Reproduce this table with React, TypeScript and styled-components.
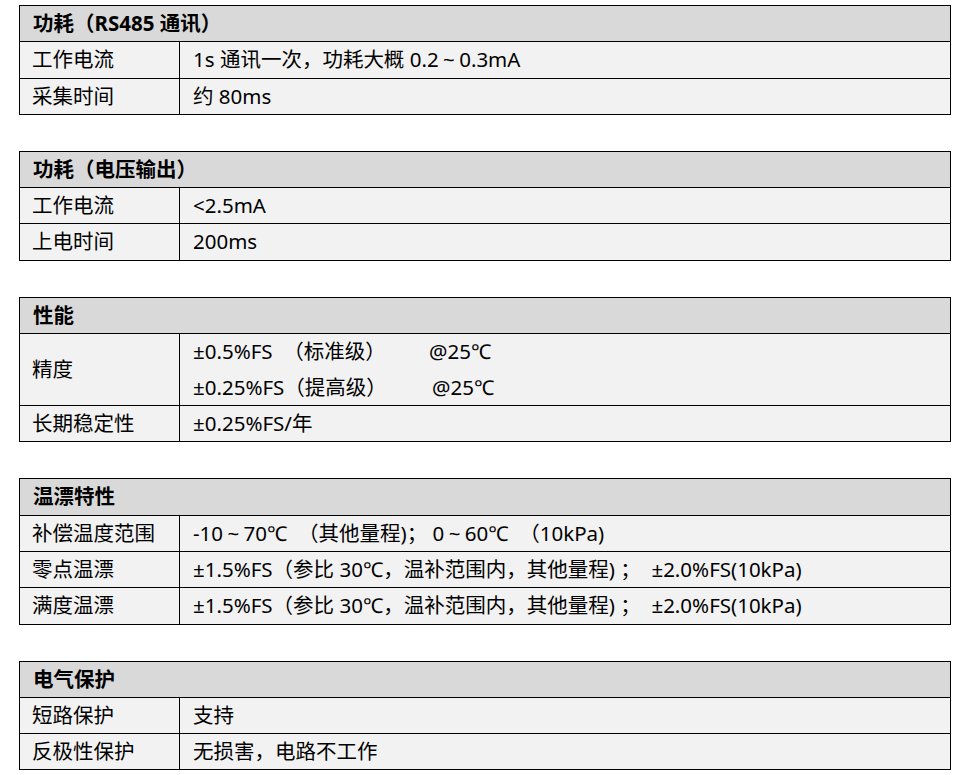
import React from "react";
import styled, { createGlobalStyle } from "styled-components";

const GlobalStyle = createGlobalStyle`
  html, body {
    margin: 0;
    padding: 0;
    background: #ffffff;
  }
  body {
    font-family: "Noto Sans", "Noto Sans CJK SC", sans-serif;
    color: #000000;
  }
`;

const Page = styled.div`
  padding: 5px 19px 0 19px;
  display: flex;
  flex-direction: column;
  gap: 36px;
`;

const Table = styled.table`
  width: 100%;
  border-collapse: collapse;
  table-layout: fixed;
  font-size: 20.5px;
  line-height: 35.3px;
`;

const HeadCell = styled.th`
  background: #d9d9d9;
  border: 1px solid #000;
  text-align: left;
  font-weight: 700;
  padding: 0 13px;
`;

const LabelCell = styled.td`
  background: #f2f2f2;
  border: 1px solid #000;
  padding: 0 12px;
  white-space: nowrap;
`;

const ValueCell = styled.td`
  background: #f2f2f2;
  border: 1px solid #000;
  padding: 0 13px;
  white-space: pre;
`;

const SubLine = styled.div`
  display: flex;
  height: 35.5px;
  align-items: center;
`;

const Grade = styled.span<{ $w: number }>`
  display: inline-block;
  width: ${(p) => p.$w}px;
  white-space: pre;
`;

const Tilde = styled.span`
  display: inline-block;
  width: 1em;
  text-align: center;
`;

const T = () => <Tilde>~</Tilde>;

type Row = { label: string; value: React.ReactNode };

const sections: { title: string; rows: Row[] }[] = [
  {
    title: "功耗（RS485 通讯）",
    rows: [
      {
        label: "工作电流",
        value: (
          <>
            1s 通讯一次，功耗大概 0.2<T />0.3mA
          </>
        ),
      },
      { label: "采集时间", value: "约 80ms" },
    ],
  },
  {
    title: "功耗（电压输出）",
    rows: [
      { label: "工作电流", value: "<2.5mA" },
      { label: "上电时间", value: "200ms" },
    ],
  },
  {
    title: "性能",
    rows: [
      {
        label: "精度",
        value: (
          <>
            <SubLine>
              <Grade $w={236}>±0.5%FS  （标准级）</Grade>
              <span>@25℃</span>
            </SubLine>
            <SubLine>
              <Grade $w={239}>±0.25%FS（提高级）</Grade>
              <span>@25℃</span>
            </SubLine>
          </>
        ),
      },
      { label: "长期稳定性", value: "±0.25%FS/年" },
    ],
  },
  {
    title: "温漂特性",
    rows: [
      {
        label: "补偿温度范围",
        value: (
          <>
            -10<T />70℃  （其他量程)； 0<T />60℃  （10kPa)
          </>
        ),
      },
      { label: "零点温漂", value: "±1.5%FS（参比 30℃，温补范围内，其他量程) ；  ±2.0%FS(10kPa)" },
      { label: "满度温漂", value: "±1.5%FS（参比 30℃，温补范围内，其他量程) ；  ±2.0%FS(10kPa)" },
    ],
  },
  {
    title: "电气保护",
    rows: [
      { label: "短路保护", value: "支持" },
      { label: "反极性保护", value: "无损害，电路不工作" },
    ],
  },
];

export default function App() {
  return (
    <>
      <GlobalStyle />
      <Page>
        {sections.map((s) => (
          <Table key={s.title}>
            <colgroup>
              <col style={{ width: 160 }} />
              <col />
            </colgroup>
            <thead>
              <tr>
                <HeadCell colSpan={2}>{s.title}</HeadCell>
              </tr>
            </thead>
            <tbody>
              {s.rows.map((r) => (
                <tr key={r.label}>
                  <LabelCell>{r.label}</LabelCell>
                  <ValueCell>{r.value}</ValueCell>
                </tr>
              ))}
            </tbody>
          </Table>
        ))}
      </Page>
    </>
  );
}
